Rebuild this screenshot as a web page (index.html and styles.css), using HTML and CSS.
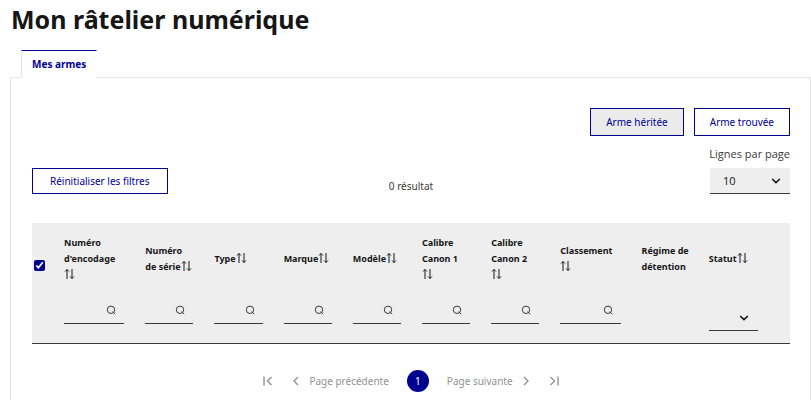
FILE: index.html
```
<!DOCTYPE html>
<html lang="fr">
  <head>
    <meta charset="UTF-8" />
    <meta name="viewport" content="width=device-width, initial-scale=1.0" />
    <title>Mon râtelier numérique</title>
    <link rel="stylesheet" href="styles.css">
  </head>
  <body>
    <svg width="0" height="0" class="sprite" aria-hidden="true">
      <symbol id="sort" viewBox="0 0 11 12">
        <path d="M3 11V1.5M1 3.5L3 1.5l2 2M8 1V10.5M6 8.5L8 10.5l2-2" />
      </symbol>
      <symbol id="search" viewBox="0 0 10 10">
        <circle cx="5" cy="4.8" r="3.7" />
        <path d="M6.6 6.6L9.2 9.2" />
      </symbol>
      <symbol id="chevron" viewBox="0 0 10 6">
        <path d="M1.2 1L5 4.6L8.8 1" />
      </symbol>
      <symbol id="prev" viewBox="0 0 10 10">
        <path d="M7 1L3 5l4 4" />
      </symbol>
      <symbol id="next" viewBox="0 0 10 10">
        <path d="M3 1l4 4-4 4" />
      </symbol>
      <symbol id="first" viewBox="0 0 10 10">
        <path d="M1 0.5v9M8.5 1l-4 4 4 4" />
      </symbol>
      <symbol id="last" viewBox="0 0 10 10">
        <path d="M9 0.5v9M1.5 1l4 4-4 4" />
      </symbol>
    </svg>

    <main class="page">
      <h1>Mon râtelier numérique</h1>

      <div class="tabs" role="tablist">
        <button class="tab" role="tab" id="tab-armes" aria-selected="true" aria-controls="panel-armes">Mes armes</button>
      </div>

      <section class="panel" role="tabpanel" id="panel-armes" aria-labelledby="tab-armes">
        <div class="actions">
          <button class="btn btn-hover">Arme héritée</button>
          <button class="btn">Arme trouvée</button>
        </div>

        <div class="toolbar">
          <button class="btn btn-reset">Réinitialiser les filtres</button>
          <p class="count">0 résultat</p>
          <div class="page-size">
            <label for="lines">Lignes par page</label>
            <div class="select">
              <select id="lines">
                <option>10</option>
                <option>20</option>
                <option>50</option>
              </select>
              <svg class="icon chevron"><use href="#chevron" /></svg>
            </div>
          </div>
        </div>

        <table>
          <colgroup>
            <col class="col-check" />
            <col class="col-large" />
            <col class="col" />
            <col class="col" />
            <col class="col" />
            <col class="col" />
            <col class="col" />
            <col class="col" />
            <col class="col-large" />
            <col class="col-regime" />
            <col class="col-large" />
          </colgroup>
          <thead>
            <tr class="labels">
              <th class="check"><input type="checkbox" aria-label="Tout sélectionner" checked /></th>
              <th>Numéro d'encodage<br /><svg class="icon sort"><use href="#sort" /></svg></th>
              <th>Numéro de&nbsp;série<svg class="icon sort"><use href="#sort" /></svg></th>
              <th>Type<svg class="icon sort"><use href="#sort" /></svg></th>
              <th>Marque<svg class="icon sort"><use href="#sort" /></svg></th>
              <th>Modèle<svg class="icon sort"><use href="#sort" /></svg></th>
              <th>Calibre Canon&nbsp;1<br /><svg class="icon sort"><use href="#sort" /></svg></th>
              <th>Calibre Canon&nbsp;2<br /><svg class="icon sort"><use href="#sort" /></svg></th>
              <th>Classement<br /><svg class="icon sort"><use href="#sort" /></svg></th>
              <th>Régime de détention</th>
              <th>Statut<svg class="icon sort"><use href="#sort" /></svg></th>
            </tr>
            <tr class="filters">
              <td></td>
              <td><div class="filter"><input type="text" aria-label="Numéro d'encodage" /><svg class="icon search"><use href="#search" /></svg></div></td>
              <td><div class="filter"><input type="text" aria-label="Numéro de série" /><svg class="icon search"><use href="#search" /></svg></div></td>
              <td><div class="filter"><input type="text" aria-label="Type" /><svg class="icon search"><use href="#search" /></svg></div></td>
              <td><div class="filter"><input type="text" aria-label="Marque" /><svg class="icon search"><use href="#search" /></svg></div></td>
              <td><div class="filter"><input type="text" aria-label="Modèle" /><svg class="icon search"><use href="#search" /></svg></div></td>
              <td><div class="filter"><input type="text" aria-label="Calibre Canon 1" /><svg class="icon search"><use href="#search" /></svg></div></td>
              <td><div class="filter"><input type="text" aria-label="Calibre Canon 2" /><svg class="icon search"><use href="#search" /></svg></div></td>
              <td><div class="filter"><input type="text" aria-label="Classement" /><svg class="icon search"><use href="#search" /></svg></div></td>
              <td></td>
              <td>
                <div class="filter filter-select">
                  <select aria-label="Statut"><option></option></select>
                  <svg class="icon chevron"><use href="#chevron" /></svg>
                </div>
              </td>
            </tr>
          </thead>
        </table>

        <nav class="pagination" aria-label="Pagination">
          <a href="#" aria-label="Première page"><svg class="icon"><use href="#first" /></svg></a>
          <a href="#"><svg class="icon"><use href="#prev" /></svg>Page précédente</a>
          <a href="#" class="current" aria-current="page">1</a>
          <a href="#">Page suivante<svg class="icon"><use href="#next" /></svg></a>
          <a href="#" aria-label="Dernière page"><svg class="icon"><use href="#last" /></svg></a>
        </nav>
      </section>
    </main>
  </body>
</html>
```
FILE: styles.css
```
* {
  box-sizing: border-box;
}

body {
  margin: 0;
  font-family: "Noto Sans", "Open Sans", sans-serif;
  font-size: 10px;
  line-height: 16px;
  color: #3a3a3a;
  background: #fff;
}

button,
input,
select {
  font: inherit;
  margin: 0;
}

.sprite {
  position: absolute;
}

.icon {
  width: 10px;
  height: 10px;
  fill: none;
  stroke: currentColor;
  flex-shrink: 0;
}

.page {
  padding-left: 10px;
}

h1 {
  margin: 0;
  padding: 1px 0 0 1px;
  font-size: 25px;
  line-height: 36px;
  color: #161616;
}

/* tabs */
.tabs {
  display: flex;
  margin-top: 13px;
  padding-left: 11px;
}

.tab {
  position: relative;
  z-index: 1;
  height: 28px;
  margin-bottom: -1px;
  padding: 0 10px 2px;
  border: 1px solid #fff;
  border-top-color: #000091;
  border-left-color: #e5e5e5;
  border-bottom: none;
  background: #fff;
  color: #000091;
  font-weight: 700;
}

.panel {
  min-height: calc(100vh - 77px);
  padding: 30px 20px 8px 21px;
  border: 1px solid #e5e5e5;
  border-bottom: none;
}

.btn {
  height: 28px;
  padding: 0 15px;
  border: 1px solid #000091;
  background: #fff;
  color: #000091;
}

.btn-hover {
  background: #ebebeb;
}

.btn-reset {
  height: 26px;
  padding: 0 17px;
}

.actions {
  display: flex;
  justify-content: flex-end;
  gap: 10px;
}

.toolbar {
  display: grid;
  grid-template-columns: 1fr auto 1fr;
  align-items: end;
  margin-top: 10px;
}

.toolbar .btn {
  justify-self: start;
}

.count {
  margin: 0;
}

.page-size {
  display: flex;
  flex-direction: column;
  align-items: flex-end;
  gap: 6px;
  font-family: "Open Sans", sans-serif;
  font-size: 11px;
}

.select {
  position: relative;
  width: 80px;
}

.select select {
  display: block;
  width: 100%;
  height: 26px;
  padding: 0 13px;
  border: none;
  border-bottom: 1px solid #3a3a3a;
  border-radius: 2px 2px 0 0;
  background: #eee;
  color: #161616;
  font-weight: 500;
  appearance: none;
}

.chevron {
  position: absolute;
  right: 9px;
  top: 10px;
  height: 6px;
  color: #161616;
  stroke-width: 1.6;
  pointer-events: none;
}

/* table */
table {
  width: 100%;
  margin-top: 29px;
  table-layout: fixed;
  border-collapse: collapse;
  background: #eee;
  border-bottom: 1px solid #3a3a3a;
}

.col-check {
  width: 32px;
}

.col {
  width: 69px;
}

.col-large {
  width: 81px;
}

.col-regime {
  width: 67px;
}

th,
td {
  padding: 0;
  text-align: left;
}

th {
  padding-right: 16px;
  font-size: 9px;
  font-weight: 700;
  color: #161616;
  vertical-align: middle;
}

.labels {
  height: 72px;
}

.check {
  padding: 12px 0 0 2px;
}

.check input {
  display: block;
  width: 11px;
  height: 11px;
  accent-color: #000091;
}

.sort {
  width: 11px;
  height: 12px;
  vertical-align: -2px;
}

.filters td {
  height: 48px;
  vertical-align: top;
}

.filter {
  position: relative;
  margin-right: 21px;
}

.filter input,
.filter select {
  display: block;
  width: 100%;
  height: 29px;
  padding: 0 20px 0 0;
  border: none;
  border-bottom: 1px solid #3a3a3a;
  border-radius: 0;
  background: transparent;
  appearance: none;
}

.filter .search {
  position: absolute;
  right: 8px;
  top: 10px;
  pointer-events: none;
}

.filter-select {
  margin-right: 32px;
}

.filter-select select {
  height: 36px;
}

.filter-select .chevron {
  top: 20px;
}

/* pagination */
.pagination {
  display: flex;
  justify-content: center;
  align-items: center;
  gap: 18px;
  margin-top: 26px;
}

.pagination a {
  display: flex;
  align-items: center;
  gap: 8px;
  color: #929292;
  text-decoration: none;
}

.pagination .icon {
  stroke-width: 1.4;
}

.pagination .current {
  justify-content: center;
  width: 22px;
  height: 22px;
  border-radius: 50%;
  background: #000091;
  color: #fff;
}
```
